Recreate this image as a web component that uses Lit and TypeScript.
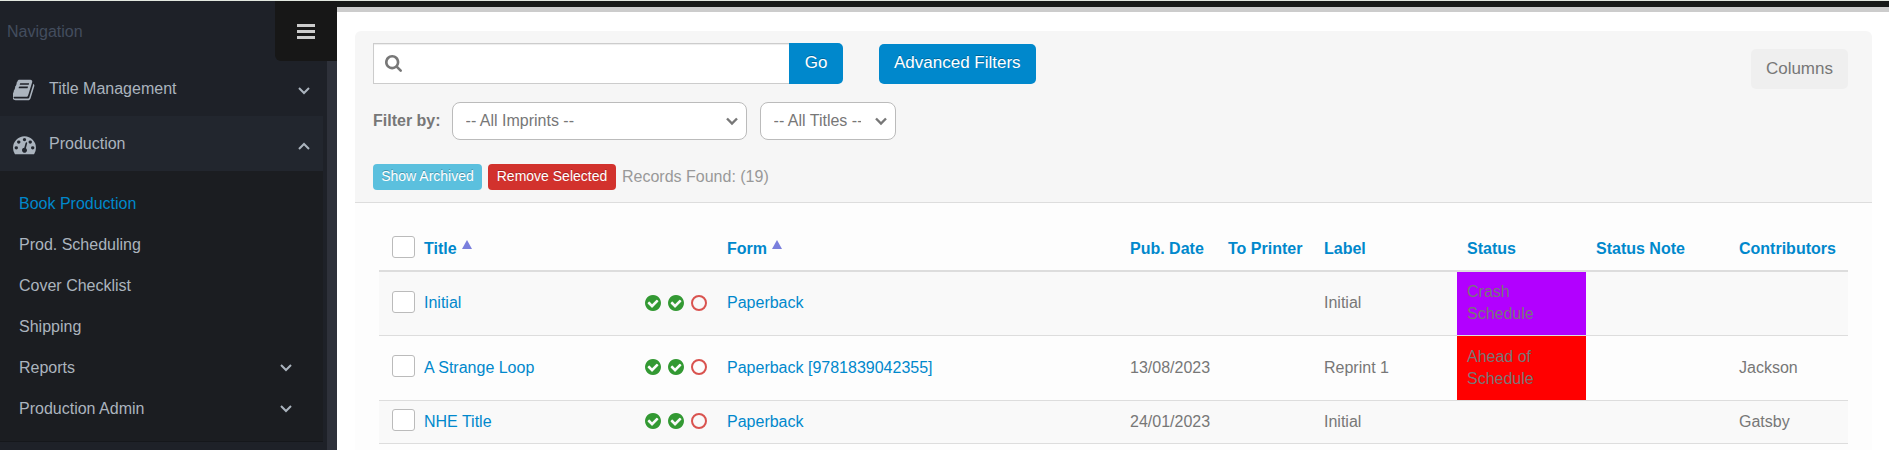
import { LitElement, html, css, svg, nothing } from "lit";
import { customElement, property, state } from "lit/decorators.js";
import { classMap } from "lit/directives/class-map.js";

const BOOK =
  "M1639 478q40 57 18 129l-275 906q-19 64-76.5 107.5t-122.5 43.5h-923q-77 0-148.5-53.5t-99.500-131.5q-24-67-2-127 0-4 3-27t4-37q1-8-3-21.500t-3-19.500q2-11 8-21t16.500-23.500 16.500-23.500q23-38 45-91.500t30-91.500q3-10 .5-30t-.5-28q3-11 17-28t17-23q21-36 42-92t25-90q1-9-2.500-32t.5-28q4-13 22-30.500t22-22.500q19-26 42.500-84.500t27.500-96.500q1-8-3-25.500t-2-26.500q2-8 9-18t18-23 17-21q8-12 16.500-30.500t15-35 16-36 19.500-32 26.500-23.500 36-11.500 47.500 5.500l-1 3q38-9 51-9h761q74 0 114 56t18 130l-274 906q-36 119-71.500 153.500t-128.500 34.500h-869q-27 0-38 15-11 16-1 43 24 70 144 70h923q29 0 56-15.500t35-41.500l300-987q7-22 5-57 38 15 59 43zm-1064 2q-4 13 2 22.500t20 9.500h608q13 0 25.500-9.500t16.500-22.500l21-64q4-13-2-22.500t-20-9.500h-608q-13 0-25.500 9.500t-16.500 22.500zm-83 256q-4 13 2 22.500t20 9.500h608q13 0 25.500-9.500t16.500-22.500l21-64q4-13-2-22.500t-20-9.500h-608q-13 0-25.500 9.500t-16.500 22.500z";
const GAUGE =
  "M384 1152q0-53-37.5-90.500t-90.500-37.500-90.500 37.500-37.500 90.500 37.500 90.500 90.500 37.500 90.500-37.500 37.500-90.500zm192-448q0-53-37.500-90.500t-90.500-37.500-90.500 37.500-37.500 90.500 37.500 90.500 90.500 37.500 90.500-37.500 37.500-90.500zm428 481l101-382q6-26-7.500-48.500t-38.500-29.500-48 6.500-30 39.500l-101 382q-60 5-107 43.500t-63 98.500q-20 77 20 146t117 89 146-20 89-117q16-60-6-117t-72-91zm660-33q0-53-37.500-90.500t-90.500-37.500-90.500 37.500-37.500 90.500 37.500 90.500 90.500 37.500 90.500-37.500 37.500-90.500zm-640-640q0-53-37.500-90.500t-90.500-37.500-90.500 37.500-37.500 90.500 37.500 90.500 90.500 37.500 90.500-37.500 37.500-90.500zm448 192q0-53-37.500-90.500t-90.500-37.500-90.500 37.500-37.500 90.500 37.500 90.500 90.500 37.500 90.500-37.500 37.500-90.500zm320 448q0 261-141 483-19 29-54 29h-1402q-35 0-54-29-141-221-141-483 0-182 71-348t191-286 286-191 348-71 348 71 286 191 191 286 71 348z";
const SEARCH =
  "M1216 832q0-185-131.5-316.5t-316.5-131.5-316.5 131.5-131.5 316.5 131.5 316.5 316.5 131.5 316.5-131.5 131.5-316.5zm512 832q0 52-38 90t-90 38q-54 0-90-38l-343-342q-179 124-399 124-143 0-273.5-55.5t-225-150-150-225-55.500-273.5 55.500-273.5 150-225 225-150 273.5-55.500 273.5 55.500 225 150 150 225 55.500 273.5q0 220-124 399l343 343q37 37 37 90z";
const CHECK_CIRCLE =
  "M1412 734q0-28-18-46l-91-90q-19-19-45-19t-45 19l-408 407-226-226q-19-19-45-19t-45 19l-91 90q-18 18-18 46 0 27 18 45l362 362q19 19 45 19 27 0 46-19l543-543q18-18 18-45zm252 162q0 209-103 385.500t-279.500 279.500-385.500 103-385.500-103-279.500-279.500-103-385.500 103-385.500 279.500-279.500 385.500-103 385.500 103 279.500 279.500 103 385.500z";

const shared = css`
  *, *::before, *::after { box-sizing: border-box; }
  :host { display: block; font-family: "Liberation Sans", Arial, sans-serif; font-size: 16px; line-height: 22px; }
  svg { display: block; flex: none; }
  a { text-decoration: none; }
  button, input, select { font-family: inherit; margin: 0; }
  button { cursor: pointer; }
`;

const chevron = (up = false) => html`
  <svg width="12" height="8" viewBox="0 0 12 8" fill="none" stroke="currentColor" stroke-width="2" aria-hidden="true">
    ${up ? svg`<path d="M1 7 L6 2 L11 7" />` : svg`<path d="M1 1 L6 6 L11 1" />`}
  </svg>`;

interface SubItem { label: string; active?: boolean; expandable?: boolean; }

@customElement("side-nav")
export class SideNav extends LitElement {
  @state() private open = true;

  private items: SubItem[] = [
    { label: "Book Production", active: true },
    { label: "Prod. Scheduling" },
    { label: "Cover Checklist" },
    { label: "Shipping" },
    { label: "Reports", expandable: true },
    { label: "Production Admin", expandable: true },
  ];

  static styles = [shared, css`
    :host { background: #1e2128; border-right: 10px solid #2e313a; color: #abb4be; }
    .head { display: flex; justify-content: space-between; height: 60px; margin-right: -10px; }
    .caption { padding: 20px 7px; color: #434d5e; }
    .toggle { width: 62px; display: grid; place-items: center; padding: 0; border: 0; background: #171717; border-radius: 0 0 0 6px; color: #ccc; }
    .menu { margin-right: 4px; }
    .item { display: flex; align-items: center; width: 100%; height: 55px; padding: 0 13px; border: 0; background: none; color: inherit; font-size: 16px; line-height: 22px; text-align: left; }
    .item.open { background: #22262e; }
    .icon { width: 36px; padding-top: 2px; }
    .text { flex: 1; }
    .chev { padding-top: 4px; }
    .sub { list-style: none; margin: 0; padding: 12px 0; background: #1b1d21; border-bottom: 1px solid #15171b; }
    .sub a { display: flex; align-items: center; justify-content: space-between; height: 41px; padding: 0 31px 0 19px; color: inherit; }
    .sub a.active { color: #0088cc; }
  `];

  render() {
    return html`
      <div class="head">
        <div class="caption">Navigation</div>
        <button class="toggle" aria-label="Toggle navigation">
          <svg width="18" height="15" viewBox="0 0 18 15" fill="currentColor">
            <path d="M0 0h18v3H0zM0 6h18v3H0zM0 12h18v3H0z" />
          </svg>
        </button>
      </div>
      <nav class="menu">
        <button class="item">
          <span class="icon"><svg width="24" height="24" viewBox="68 0 1792 1792" fill="currentColor"><path d=${BOOK} /></svg></span>
          <span class="text">Title Management</span>
          <span class="chev">${chevron()}</span>
        </button>
        <button class=${classMap({ item: true, open: this.open })} aria-expanded=${this.open} @click=${() => (this.open = !this.open)}>
          <span class="icon"><svg width="23" height="23" viewBox="0 0 1792 1792" fill="currentColor"><path d=${GAUGE} /></svg></span>
          <span class="text">Production</span>
          <span class="chev">${chevron(this.open)}</span>
        </button>
        ${this.open ? html`
          <ul class="sub">
            ${this.items.map((i) => html`
              <li><a href="#" class=${classMap({ active: !!i.active })}>${i.label}${i.expandable ? chevron() : nothing}</a></li>`)}
          </ul>` : nothing}
      </nav>`;
  }
}

@customElement("filter-bar")
export class FilterBar extends LitElement {
  @property({ type: Number }) records = 0;

  static styles = [shared, css`
    :host { background: #f6f6f6; border-bottom: 1px solid #ddd; border-radius: 6px 6px 0 0; color: #777; }
    .bar { display: flex; justify-content: space-between; align-items: flex-start; padding: 12px 24px 12px 18px; }
    .left { flex: 1; }
    .row { display: flex; align-items: center; }
    .search { display: flex; align-items: center; flex: 0 1 416px; height: 41px; padding: 0 11px; gap: 8px; background: #fff; border: 1px solid #ccc; border-right: 0; box-shadow: inset 0 1px 1px rgba(0, 0, 0, 0.075); }
    .search input { flex: 1; min-width: 0; border: 0; outline: 0; background: none; font-size: 16px; color: #555; }
    .btn { border: 0; color: #fff; background: #0088cc; border-radius: 5px; height: 40px; padding: 0 15px 2px; font-size: 17px; line-height: 22px; text-shadow: 0 -1px 0 rgba(0, 0, 0, 0.25); white-space: nowrap; }
    .go { width: 54px; height: 41px; border-radius: 0 5px 5px 0; margin-right: 36px; }
    .columns { background: #efefef; color: #777; text-shadow: none; margin-top: 6px; padding-bottom: 0; }
    .filters { margin-top: 18px; }
    .by { font-weight: bold; margin-right: 11px; }
    .pick { display: grid; align-items: center; margin-right: 13px; }
    .pick select, .pick svg { grid-area: 1 / 1; }
    .pick svg { justify-self: end; margin-right: 8px; pointer-events: none; }
    select { appearance: none; height: 38px; padding: 0 34px 0 13px; border: 1px solid #bbb; border-radius: 8px; background: #fff; color: #777; font-size: 16px; line-height: 22px; }
    .imprints { width: 295px; }
    .titles { width: 136px; }
    .actions { margin-top: 24px; gap: 6px; }
    .small { height: 26px; padding: 0 7px 2px; border-radius: 4px; font-size: 14px; line-height: 20px; min-width: 109px; }
    .info { background: #5bc0de; }
    .danger { background: #d2322d; min-width: 128px; }
    .count { color: #999; }
  `];

  private arrow = html`
    <svg width="14" height="10" viewBox="0 0 14 10" fill="none" stroke="#777" stroke-width="2.4" aria-hidden="true"><path d="M2 2.500 L7 7.500 L12 2.500" /></svg>`;

  render() {
    return html`
      <div class="bar">
        <div class="left">
          <div class="row">
            <label class="search">
              <svg width="17" height="17" viewBox="64 128 1664 1664" fill="#777"><path d=${SEARCH} /></svg>
              <input type="text" aria-label="Search titles" />
            </label>
            <button class="btn go">Go</button>
            <button class="btn">Advanced Filters</button>
          </div>
          <div class="row filters">
            <label class="by" for="imprint">Filter by:</label>
            <span class="pick">
              <select id="imprint" class="imprints"><option>-- All Imprints --</option></select>${this.arrow}
            </span>
            <span class="pick">
              <select class="titles" aria-label="Titles"><option>-- All Titles --</option></select>${this.arrow}
            </span>
          </div>
          <div class="row actions">
            <button class="btn small info">Show Archived</button>
            <button class="btn small danger">Remove Selected</button>
            <span class="count">Records Found: (${this.records})</span>
          </div>
        </div>
        <button class="btn columns">Columns</button>
      </div>`;
  }
}

interface Row { title: string; form: string; pub: string; label: string; status: string; tone: string; contributors: string; }

@customElement("title-table")
export class TitleTable extends LitElement {
  private rows: Row[] = [
    { title: "Initial", form: "Paperback", pub: "", label: "Initial", status: "Crash Schedule", tone: "crash", contributors: "" },
    { title: "A Strange Loop", form: "Paperback [9781839042355]", pub: "13/08/2023", label: "Reprint 1", status: "Ahead of Schedule", tone: "ahead", contributors: "Jackson" },
    { title: "NHE Title", form: "Paperback", pub: "24/01/2023", label: "Initial", status: "", tone: "", contributors: "Gatsby" },
  ];

  static styles = [shared, css`
    :host { background: #fdfdfd; padding: 20px 24px 0; color: #777; }
    table { width: 100%; table-layout: fixed; border-collapse: separate; border-spacing: 0; }
    a { color: #0088cc; }
    th, td { text-align: left; vertical-align: middle; padding: 9px 10px 10px; border-bottom: 1px solid #ddd; }
    tbody tr + tr td { padding-top: 10px; }
    th { height: 49px; border-bottom-width: 2px; white-space: nowrap; padding: 14px 10px 9px; }
    tbody tr:nth-child(odd) td { background: #f9f9f9; }
    .c-check { width: 40px; }
    .c-icons { width: 72px; }
    .c-title { width: 226px; }
    .c-pub { width: 98px; }
    .c-printer { width: 96px; }
    .c-wide { width: 143px; }
    .c-status { width: 129px; }
    .c-contrib { width: 119px; }
    tbody tr td.check { padding: 6px 0 10px 13px; }
    th.check { padding: 12px 0 12px 13px; }
    .title { padding-left: 5px; }
    .check input { appearance: none; display: block; width: 23px; height: 22px; margin: 0; border: 1px solid #bbb; border-radius: 3px; background: #fff; }
    tbody tr td.icons { padding: 6px 10px 8px 0; }
    .marks { display: flex; gap: 7px; }
    .sort { display: inline-flex; gap: 5px; }
    .sort svg { margin-top: 2px; }
    tbody tr td.crash { background: #b200ff; }
    tbody tr td.ahead { background: #ff0000; }
    .status-text { display: block; max-width: 80px; }
  `];

  private up = html`<svg width="10" height="9" viewBox="0 0 10 9" fill="#7a7fdd" aria-hidden="true"><path d="M5 0 L10 9 H0 Z" /></svg>`;
  private done = html`<svg width="16" height="16" viewBox="128 128 1536 1536" fill="#339933" role="img" aria-label="Done"><path d=${CHECK_CIRCLE} /></svg>`;
  private todo = html`<svg width="16" height="16" viewBox="0 0 16 16" fill="none" stroke="#d9534f" stroke-width="2" role="img" aria-label="Open"><circle cx="8" cy="8" r="7" /></svg>`;

  render() {
    return html`
      <table>
        <colgroup>
          <col class="c-check" /><col class="c-title" /><col class="c-icons" /><col />
          <col class="c-pub" /><col class="c-printer" /><col class="c-wide" />
          <col class="c-status" /><col class="c-wide" /><col class="c-contrib" />
        </colgroup>
        <thead>
          <tr>
            <th class="check"><input type="checkbox" aria-label="Select all" /></th>
            <th class="title" colspan="2"><a href="#" class="sort">Title ${this.up}</a></th>
            <th><a href="#" class="sort">Form ${this.up}</a></th>
            <th><a href="#">Pub. Date</a></th>
            <th><a href="#">To Printer</a></th>
            <th><a href="#">Label</a></th>
            <th><a href="#">Status</a></th>
            <th><a href="#">Status Note</a></th>
            <th><a href="#">Contributors</a></th>
          </tr>
        </thead>
        <tbody>
          ${this.rows.map((r) => html`
            <tr>
              <td class="check"><input type="checkbox" aria-label=${`Select ${r.title}`} /></td>
              <td class="title"><a href="#">${r.title}</a></td>
              <td class="icons"><div class="marks">${this.done}${this.done}${this.todo}</div></td>
              <td><a href="#">${r.form}</a></td>
              <td>${r.pub}</td>
              <td></td>
              <td>${r.label}</td>
              <td class=${r.tone}><span class="status-text">${r.status}</span></td>
              <td></td>
              <td>${r.contributors}</td>
            </tr>`)}
        </tbody>
      </table>`;
  }
}

@customElement("app-root")
export class AppRoot extends LitElement {
  static styles = [shared, css`
    :host { display: flex; align-items: stretch; min-height: 100vh; box-sizing: border-box; background: #fff; border-top: 1px solid #e3e8e0; }
    side-nav { flex: 0 0 337px; box-sizing: border-box; }
    .main { flex: 1; min-width: 0; display: flex; flex-direction: column; }
    .strip { height: 11px; background: #ccc; border-top: 6px solid #171918; }
    .content { flex: 1; display: flex; flex-direction: column; padding: 19px 17px 0 18px; }
    title-table { flex: 1; }
  `];

  render() {
    return html`
      <side-nav></side-nav>
      <div class="main">
        <div class="strip"></div>
        <main class="content">
          <filter-bar .records=${19}></filter-bar>
          <title-table></title-table>
        </main>
      </div>`;
  }
}
